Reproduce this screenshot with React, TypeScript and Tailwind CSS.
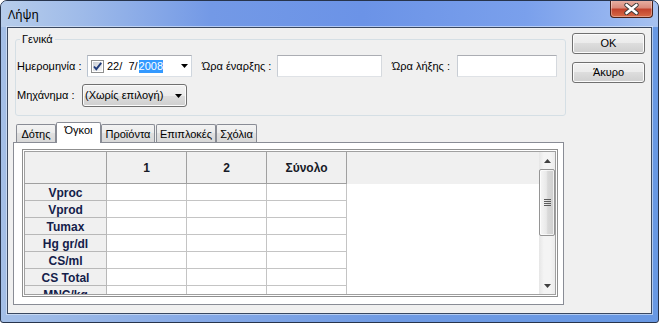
import React from "react";

const btnBg =
  "bg-[linear-gradient(to_bottom,#f2f2f2_0%,#ebebeb_50%,#dddddd_50%,#cfcfcf_100%)]";

function DownTri({ className = "" }: { className?: string }) {
  return (
    <svg width="7" height="4" viewBox="0 0 7 4" className={className}>
      <path d="M0 0 H7 L3.5 4 Z" fill="#000" />
    </svg>
  );
}

function CheckBox() {
  return (
    <svg width="13" height="13" viewBox="0 0 13 13">
      <defs>
        <linearGradient id="cbg" x1="0" y1="0" x2="1" y2="1">
          <stop offset="0" stopColor="#cbcfd5" />
          <stop offset="1" stopColor="#f6f6f6" />
        </linearGradient>
      </defs>
      <rect x="0.5" y="0.5" width="12" height="12" fill="#fff" stroke="#8e8f8f" />
      <rect x="2" y="2" width="9" height="9" fill="url(#cbg)" />
      <path d="M3 6.5 L5.3 9.2 L10.2 2.8" fill="none" stroke="#1f3b7a" strokeWidth="1.9" />
    </svg>
  );
}

function CloseBtn() {
  return (
    <div className="-mt-[1px] mr-[5px] w-[43px] h-[18px] border border-[#4a2018] border-t-0 rounded-b-[4px] bg-[linear-gradient(to_bottom,#e8b3a6_0%,#d98b7c_45%,#c2432d_55%,#d76a47_100%)] shadow-[inset_0_0_0_1px_rgba(255,255,255,0.35)] flex items-center justify-center">
      <svg width="15" height="12" viewBox="0 0 15 12">
        <path d="M2.5 2 L12.5 10 M12.5 2 L2.5 10" stroke="#3a3a3a" strokeWidth="4.4" strokeLinecap="round" />
        <path d="M2.5 2 L12.5 10 M12.5 2 L2.5 10" stroke="#ffffff" strokeWidth="2.6" strokeLinecap="round" />
      </svg>
    </div>
  );
}

function Button({ label, className = "" }: { label: string; className?: string }) {
  return (
    <div
      className={`w-[73px] h-[21px] border border-[#707070] rounded-[3px] ${btnBg} shadow-[inset_0_0_0_1px_#fbfbfb] flex items-center justify-center text-[11px] leading-none text-black ${className}`}
    >
      {label}
    </div>
  );
}

function Tab({ label, w, active = false, className = "" }: { label: string; w: string; active?: boolean; className?: string }) {
  if (active) {
    return (
      <div
        className={`${w} h-[21px] -mb-[1px] relative z-10 bg-white border border-[#898c95] border-b-0 rounded-t-[2px] flex justify-center pt-[1px] text-[11px] leading-[13px] text-black ${className}`}
      >
        {label}
      </div>
    );
  }
  return (
    <div
      className={`${w} h-[18px] border border-[#898c95] border-b-0 rounded-t-[2px] bg-[linear-gradient(to_bottom,#f3f3f3_0%,#ebebeb_50%,#e0e0e0_50%,#d8d8d8_100%)] flex items-center justify-center pt-[1px] text-[11px] leading-[13px] text-black ${className}`}
    >
      {label}
    </div>
  );
}

const rows = ["Vproc", "Vprod", "Tumax", "Hg gr/dl", "CS/ml", "CS Total", "MNC/kg"];

function Scrollbar() {
  return (
    <div className="w-[16px] h-full flex flex-col bg-[linear-gradient(to_right,#e6e6e6,#f4f4f4_30%,#f4f4f4_70%,#ececec)]">
      <div className="h-[17px] flex items-center justify-center">
        <svg width="7" height="4" viewBox="0 0 7 4">
          <path d="M0 4 H7 L3.5 0 Z" fill="#404040" />
        </svg>
      </div>
      <div className="h-[67px] border border-[#959595] rounded-[2px] bg-[linear-gradient(to_right,#f6f6f6_0%,#e9e9e9_45%,#d9d9d9_55%,#cfcfcf_100%)] shadow-[inset_0_0_0_1px_rgba(255,255,255,0.7)] flex items-center justify-center">
        <div className="flex flex-col gap-[1px]">
          <div className="w-[7px] h-[1px] bg-[#5c5c5c]" />
          <div className="w-[7px] h-[1px] bg-[#5c5c5c]" />
          <div className="w-[7px] h-[1px] bg-[#5c5c5c]" />
          <div className="w-[7px] h-[1px] bg-[#5c5c5c]" />
        </div>
      </div>
      <div className="flex-1" />
      <div className="h-[17px] flex items-center justify-center">
        <svg width="7" height="4" viewBox="0 0 7 4">
          <path d="M0 0 H7 L3.5 4 Z" fill="#404040" />
        </svg>
      </div>
    </div>
  );
}

function Grid() {
  const head = "text-[12px] font-bold leading-none";
  return (
    <div className="mt-[6px] ml-[8px] w-[536px] h-[148px] border border-[#8f8f8f] p-[1px] bg-white">
      <div className="w-full h-full border border-[#a0a0a0] flex overflow-hidden">
        <div className="flex-1 flex flex-col overflow-hidden">
          <div className="h-[32px] shrink-0 flex bg-[#f0f0f0]">
            <div className="w-[82px] h-full border-r border-b border-[#a0a0a0]" />
            {["1", "2", "Σύνολο"].map((h) => (
              <div key={h} className={`w-[80px] h-full border-r border-b border-[#a0a0a0] flex items-center justify-center ${head} text-[#161a26]`}>
                {h}
              </div>
            ))}
            <div className="flex-1" />
          </div>
          {rows.map((r) => (
            <div key={r} className="h-[17px] shrink-0 flex">
              <div className={`w-[82px] h-full bg-[#f0f0f0] border-r border-b border-[#b8b8b8] flex items-center justify-center pt-[1px] ${head} text-[#14204a] whitespace-nowrap`}>
                {r}
              </div>
              <div className="w-[80px] h-full border-r border-b border-[#c4c4c4]" />
              <div className="w-[80px] h-full border-r border-b border-[#c4c4c4]" />
              <div className="w-[80px] h-full border-r border-b border-[#c4c4c4]" />
              <div className="flex-1" />
            </div>
          ))}
        </div>
        <Scrollbar />
      </div>
    </div>
  );
}

export default function App() {
  return (
    <div className="w-[659px] h-[323px] bg-white font-['Liberation_Sans',Arial,sans-serif] text-black">
      <div className="w-[659px] h-[323px] flex flex-col border border-[#27344c] rounded-t-[7px] rounded-b-[3px] overflow-hidden bg-[linear-gradient(to_right,#a4bfe7_0%,#86a9e6_30%,#6f9ae3_60%,#6898e3_100%)]">
        {/* Title bar */}
        <div className="h-[26px] shrink-0 flex items-start justify-between bg-[linear-gradient(to_right,#b7cdeb_0%,#9fbbe9_12%,#7399e6_32%,#6b93e7_55%,#7aa0ec_80%,#93b3ef_92%,#a7c2f0_100%)]">
          <span className="mt-[6px] ml-[7px] text-[12px] leading-[16px] text-black font-['Noto_Sans',sans-serif]">
            Λήψη
          </span>
          <CloseBtn />
        </div>

        {/* Client */}
        <div className="flex px-[6px]">
          <div className="w-[645px] h-[287px] border border-[#3a4860] bg-[#f0f0f0] shadow-[0_0_0_1px_rgba(225,235,250,0.6)] flex">
            {/* left column */}
            <div className="ml-[5px] w-[553px] flex flex-col">
              <fieldset className="ml-[2px] mt-[5px] w-[551px] h-[83px] border border-[#d5dfe5] rounded-[3px] p-0 m-0">
                <legend className="ml-[4px] px-[2px] text-[11px] leading-[12px] text-black">Γενικά</legend>
                <div className="mt-[10px] h-[22px] flex items-center pl-[1px]">
                  <div className="w-[70px] text-[11px] leading-none whitespace-nowrap">Ημερομηνία :</div>
                  <div className="w-[105px] h-[22px] bg-white border border-[#abadb3] border-l-[#b9c3cf] border-r-[#cfd6de] border-b-[#dbe0e6] flex items-center pl-[3px]">
                    <CheckBox />
                    <span className="ml-[3px] text-[11px] leading-[13px] whitespace-pre">22/  7/</span>
                    <span className="ml-[1px] text-[11px] leading-[13px] bg-[#3399ff] text-white">2008</span>
                    <DownTri className="ml-auto mr-[3px]" />
                  </div>
                  <div className="ml-[10px] w-[75px] text-[11px] leading-none whitespace-nowrap">Ώρα έναρξης :</div>
                  <div className="w-[105px] h-[22px] bg-white border border-[#abadb3] border-l-[#c8cdd4] border-r-[#d5d9de] border-b-[#dfe2e6]" />
                  <div className="ml-[10px] w-[65px] text-[11px] leading-none whitespace-nowrap">Ώρα λήξης :</div>
                  <div className="w-[100px] h-[22px] bg-white border border-[#abadb3] border-l-[#c8cdd4] border-r-[#d5d9de] border-b-[#dfe2e6]" />
                </div>
                <div className="mt-[7px] h-[23px] flex items-center pl-[1px]">
                  <div className="w-[65px] text-[11px] leading-none whitespace-nowrap">Μηχάνημα :</div>
                  <div className={`w-[105px] h-[23px] border border-[#707070] rounded-[3px] ${btnBg} shadow-[inset_0_0_0_1px_#fbfbfb] flex items-center pl-[2px]`}>
                    <span className="text-[11px] leading-[13px] whitespace-nowrap">(Χωρίς επιλογή)</span>
                    <DownTri className="ml-auto mr-[4px]" />
                  </div>
                </div>
              </fieldset>

              {/* tabs */}
              <div className="mt-[6px] h-[20px] flex items-end pl-[3px]">
                <Tab label="Δότης" w="w-[40px]" />
                <Tab label="Όγκοι" w="w-[45px]" active />
                <Tab label="Προϊόντα" w="w-[54px]" />
                <Tab label="Επιπλοκές" w="w-[60px]" className="ml-[1px]" />
                <Tab label="Σχόλια" w="w-[41px]" />
              </div>
              <div className="w-[551px] h-[163px] border border-[#898c95] bg-white">
                <Grid />
              </div>
            </div>

            {/* right column */}
            <div className="ml-[6px] mt-[5px] flex flex-col">
              <Button label="OK" />
              <Button label="Άκυρο" className="mt-[8px]" />
            </div>
          </div>
        </div>
        <div className="h-[8px]" />
      </div>
    </div>
  );
}
